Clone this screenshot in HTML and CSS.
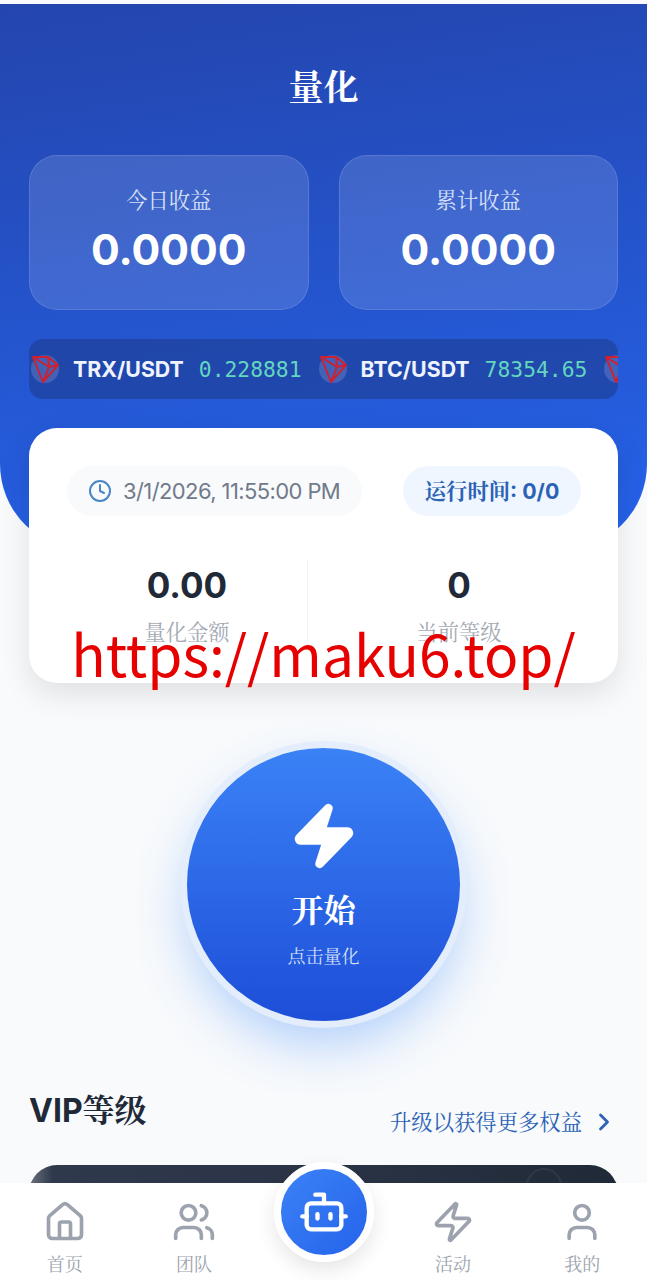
FILE: index.html
```html
<!DOCTYPE html>
<html lang="zh-CN">
<head>
    <meta charset="UTF-8">
    <meta name="viewport" content="width=device-width, initial-scale=1.0">
    <title>量化</title>
    <link rel="stylesheet" href="styles.css">
</head>
<body>
    <header class="hero">
        <h1 class="hero-title">量化</h1>
        <div class="earnings">
            <div class="earn-card">
                <div class="earn-label">今日收益</div>
                <div class="earn-value">0.0000</div>
            </div>
            <div class="earn-card">
                <div class="earn-label">累计收益</div>
                <div class="earn-value">0.0000</div>
            </div>
        </div>
        <div class="ticker">
            <div class="ticker-item">
                <svg class="coin" viewBox="0 0 28 28"><circle cx="14" cy="14" r="14" class="coin-bg"/><path class="coin-line" d="M2 2 L17 2 L27 10 L12 27 Z M2 2 L18 12 L12 27 M18 12 L27 10 M18 12 L17 2"/></svg>
                <span class="pair">TRX/USDT</span>
                <span class="price">0.228881</span>
            </div>
            <div class="ticker-item">
                <svg class="coin" viewBox="0 0 28 28"><circle cx="14" cy="14" r="14" class="coin-bg"/><path class="coin-line" d="M2 2 L17 2 L27 10 L12 27 Z M2 2 L18 12 L12 27 M18 12 L27 10 M18 12 L17 2"/></svg>
                <span class="pair">BTC/USDT</span>
                <span class="price">78354.65</span>
            </div>
            <div class="ticker-item">
                <svg class="coin" viewBox="0 0 28 28"><circle cx="14" cy="14" r="14" class="coin-bg"/><path class="coin-line" d="M2 2 L17 2 L27 10 L12 27 Z M2 2 L18 12 L12 27 M18 12 L27 10 M18 12 L17 2"/></svg>
            </div>
        </div>
    </header>

    <section class="status-card">
        <div class="status-top">
            <div class="date-pill">
                <svg class="clock" viewBox="0 0 24 24"><circle cx="12" cy="12" r="10"/><polyline points="12 6 12 12 16 14"/></svg>
                <span>3/1/2026, 11:55:00 PM</span>
            </div>
            <div class="run-pill">运行时间: 0/0</div>
        </div>
        <div class="status-stats">
            <div class="stat">
                <div class="stat-value">0.00</div>
                <div class="stat-label">量化金额</div>
            </div>
            <div class="stat">
                <div class="stat-value">0</div>
                <div class="stat-label">当前等级</div>
            </div>
        </div>
        <div class="watermark">https://maku6.top/</div>
    </section>

    <div class="start-wrap">
        <button class="start-btn">
            <svg class="start-icon" viewBox="0 0 24 24"><path d="M4 14a1 1 0 0 1-.78-1.63l9.9-10.2a.5.5 0 0 1 .86.46l-1.92 6.02A1 1 0 0 0 13 10h7a1 1 0 0 1 .78 1.63l-9.9 10.2a.5.5 0 0 1-.86-.46l1.92-6.02A1 1 0 0 0 11 14z"/></svg>
            <span class="start-text">开始</span>
            <span class="start-sub">点击量化</span>
        </button>
    </div>

    <section class="vip">
        <div class="vip-head">
            <h2 class="vip-title">VIP等级</h2>
            <a class="vip-link">升级以获得更多权益
                <svg class="chevron" viewBox="0 0 24 24"><path d="m9 18 6-6-6-6"/></svg>
            </a>
        </div>
        <div class="vip-card"></div>
    </section>

    <nav class="tabbar">
        <div class="tab">
            <svg class="tab-icon" viewBox="0 0 24 24"><path d="M15 21v-8a1 1 0 0 0-1-1h-4a1 1 0 0 0-1 1v8"/><path d="M3 10a2 2 0 0 1 .709-1.528l7-5.999a2 2 0 0 1 2.582 0l7 5.999A2 2 0 0 1 21 10v9a2 2 0 0 1-2 2H5a2 2 0 0 1-2-2z"/></svg>
            <span>首页</span>
        </div>
        <div class="tab">
            <svg class="tab-icon" viewBox="0 0 24 24"><path d="M16 21v-2a4 4 0 0 0-4-4H6a4 4 0 0 0-4 4v2"/><circle cx="9" cy="7" r="4"/><path d="M22 21v-2a4 4 0 0 0-3-3.87"/><path d="M16 3.13a4 4 0 0 1 0 7.75"/></svg>
            <span>团队</span>
        </div>
        <div class="tab tab-center">
            <div class="bot-btn">
                <svg class="bot-icon" viewBox="0 0 24 24"><path d="M12 8V4H8"/><rect width="16" height="12" x="4" y="8" rx="2"/><path d="M2 14h2"/><path d="M20 14h2"/><path d="M15 13v2"/><path d="M9 13v2"/></svg>
            </div>
        </div>
        <div class="tab">
            <svg class="tab-icon" viewBox="0 0 24 24"><path d="M4 14a1 1 0 0 1-.78-1.63l9.9-10.2a.5.5 0 0 1 .86.46l-1.92 6.02A1 1 0 0 0 13 10h7a1 1 0 0 1 .78 1.63l-9.9 10.2a.5.5 0 0 1-.86-.46l1.92-6.02A1 1 0 0 0 11 14z"/></svg>
            <span>活动</span>
        </div>
        <div class="tab">
            <svg class="tab-icon" viewBox="0 0 24 24"><path d="M19 21v-2a4 4 0 0 0-4-4H9a4 4 0 0 0-4 4v2"/><circle cx="12" cy="7" r="4"/></svg>
            <span>我的</span>
        </div>
    </nav>
</body>
</html>
```

FILE: styles.css
```css
* {
    box-sizing: border-box;
}

html, body {
    height: 1280px;
}

body {
    margin: 0;
    padding-top: 4px;
    overflow: hidden;
    background: #f8fafc;
    font-family: Inter, "Noto Serif CJK SC", "Noto Sans CJK SC", sans-serif;
    color: #1f2937;
}

/* blue top area */
.hero {
    height: 546px;
    padding: 0 29px;
    background: linear-gradient(172deg, #2445ad 0%, #2563eb 100%);
    border-radius: 0 0 86px 86px;
}

.hero-title {
    margin: 0;
    padding-top: 60px;
    height: 151px;
    text-align: center;
    font-size: 35px;
    line-height: 46px;
    font-weight: 700;
    color: #fff;
}

.earnings {
    display: flex;
    gap: 30px;
}

.earn-card {
    flex: 1;
    height: 155px;
    padding-top: 28px;
    text-align: center;
    background: rgba(255, 255, 255, 0.13);
    border: 1px solid rgba(255, 255, 255, 0.12);
    border-radius: 28px;
}

.earn-label {
    font-size: 21.33px;
    line-height: 32px;
    color: #d5e0f8;
}

.earn-value {
    margin-top: 8px;
    font-size: 42.67px;
    line-height: 52px;
    font-weight: 700;
    color: #fff;
}

.ticker {
    display: flex;
    align-items: center;
    gap: 17px;
    height: 60px;
    margin-top: 29px;
    padding-left: 2px;
    overflow: hidden;
    white-space: nowrap;
    background: rgba(30, 58, 138, 0.55);
    border-radius: 14px;
}

.ticker-item {
    display: flex;
    align-items: center;
    flex-shrink: 0;
}

.coin {
    width: 28px;
    height: 28px;
    margin-right: 14px;
}

.coin-bg {
    fill: rgba(255, 255, 255, 0.15);
}

.coin-line {
    fill: none;
    stroke: #cf2030;
    stroke-width: 2;
    stroke-linejoin: round;
}

.pair {
    font-size: 21.33px;
    font-weight: 700;
    color: #eef3ff;
}

.price {
    margin-left: 15px;
    font-family: "DejaVu Sans Mono", monospace;
    font-size: 21.33px;
    color: #63d6c0;
}

/* white card overlapping the hero */
.status-card {
    position: relative;
    width: 589px;
    height: 255px;
    margin: -122px auto 0;
    padding: 38px 37px 0 38px;
    background: #fff;
    border-radius: 28px;
    box-shadow: 0 12px 30px rgba(0, 0, 0, 0.1);
}

.status-top {
    display: flex;
    justify-content: space-between;
}

.date-pill {
    display: flex;
    align-items: center;
    gap: 11px;
    width: 295px;
    height: 50px;
    padding-left: 21px;
    background: #f8fafc;
    border-radius: 25px;
    font-size: 22px;
    color: #71798a;
    letter-spacing: -0.6px;
}

.clock {
    width: 24px;
    height: 24px;
    fill: none;
    stroke: #4a86c5;
    stroke-width: 2;
    stroke-linecap: round;
    stroke-linejoin: round;
}

.run-pill {
    width: 178px;
    height: 50px;
    line-height: 50px;
    text-align: center;
    background: #eff6ff;
    border-radius: 25px;
    font-size: 21.33px;
    font-weight: 700;
    color: #2b62b5;
}

.status-stats {
    display: grid;
    grid-template-columns: 241px 1fr;
    margin: 44px -29px 0 0;
}

.stat {
    height: 90px;
    text-align: center;
}

.stat:first-child {
    border-right: 1px solid #f1f3f6;
}

.stat-value {
    font-size: 35px;
    line-height: 50px;
    font-weight: 700;
    color: #1f2937;
}

.stat-label {
    margin-top: 6px;
    font-size: 21.33px;
    line-height: 32px;
    color: #a3a9b3;
}

.watermark {
    position: absolute;
    left: 0;
    right: 0;
    top: 188px;
    text-align: center;
    font-family: "Noto Sans CJK SC", sans-serif;
    font-size: 56.8px;
    line-height: 72px;
    color: #e60000;
}

/* big start button */
.start-wrap {
    display: flex;
    justify-content: center;
    margin-top: 65px;
}

.start-btn {
    display: flex;
    flex-direction: column;
    align-items: center;
    width: 273px;
    height: 273px;
    padding: 53px 0 0;
    border: 0;
    border-radius: 50%;
    background: linear-gradient(180deg, #3b82f6 0%, #1d4ed8 100%);
    box-shadow: 0 0 0 7px #e3edfb, 0 24px 50px rgba(80, 150, 250, 0.42);
    font-family: inherit;
    color: #fff;
}

.start-icon {
    width: 70px;
    height: 70px;
    fill: #fff;
    stroke: #fff;
    stroke-width: 2;
    stroke-linejoin: round;
}

.start-text {
    margin-top: 18px;
    font-size: 32px;
    line-height: 44px;
    font-weight: 700;
}

.start-sub {
    margin-top: 11px;
    font-size: 18px;
    line-height: 26px;
    color: #d5e0f8;
}

.vip {
    padding: 0 29px;
    margin-top: 66px;
}

.vip-head {
    display: flex;
    justify-content: space-between;
    align-items: flex-end;
    height: 78px;
    padding-bottom: 28px;
}

.vip-title {
    margin: 0 0 6px;
    font-size: 32px;
    line-height: 40px;
    font-weight: 700;
    color: #1f2937;
}

.vip-link {
    display: flex;
    align-items: center;
    font-size: 21.33px;
    line-height: 30px;
    color: #2b62b5;
}

.chevron {
    width: 28px;
    height: 28px;
    margin-left: 8px;
    fill: none;
    stroke: #2b62b5;
    stroke-width: 2.4;
    stroke-linecap: round;
    stroke-linejoin: round;
}

.vip-card {
    position: relative;
    height: 200px;
    overflow: hidden;
    background: linear-gradient(90deg, #6b7280 0%, #2f394c 4%, #2b3446 50%, #1f2937 100%);
    border-radius: 28px;
}

/* faint ring in the card corner */
.vip-card::after {
    content: "";
    position: absolute;
    top: 3px;
    right: 56px;
    width: 32px;
    height: 32px;
    border: 2px solid rgba(255, 255, 255, 0.06);
    border-radius: 50%;
}

/* bottom navigation */
.tabbar {
    position: fixed;
    left: 0;
    right: 0;
    bottom: 0;
    display: flex;
    height: 97px;
    background: #fff;
}

.tab {
    flex: 1;
    display: flex;
    flex-direction: column;
    align-items: center;
    padding-top: 17px;
    font-size: 18px;
    line-height: 26px;
    color: #9ca3af;
}

.tab-icon {
    width: 44px;
    height: 44px;
    margin-bottom: 8px;
    fill: none;
    stroke: #9ca3af;
    stroke-width: 2;
    stroke-linecap: round;
    stroke-linejoin: round;
}

.tab-center {
    position: relative;
}

.bot-btn {
    position: absolute;
    top: -21px;
    left: 50%;
    margin-left: -50px;
    display: flex;
    align-items: center;
    justify-content: center;
    width: 100px;
    height: 100px;
    border: 7px solid #fff;
    border-radius: 50%;
    background: linear-gradient(135deg, #3b82f6 0%, #2563eb 100%);
    box-shadow: 0 8px 20px rgba(0, 0, 0, 0.1);
}

.bot-icon {
    width: 52px;
    height: 52px;
    fill: none;
    stroke: #fff;
    stroke-width: 2;
    stroke-linecap: round;
    stroke-linejoin: round;
}
```
